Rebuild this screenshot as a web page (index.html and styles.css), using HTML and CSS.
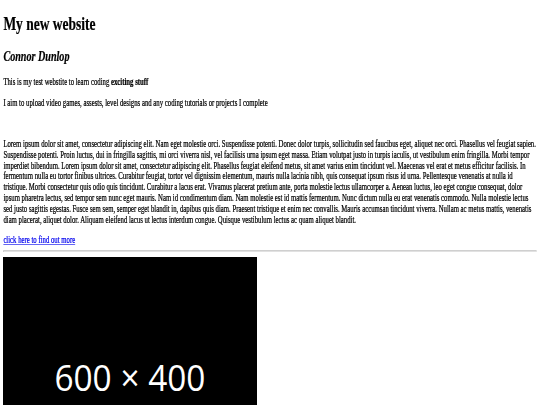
FILE: index.html
```html
<!DOCTYPE html>
<html lang="en">
<head>
<meta charset="utf-8">
<title>My new website</title>
<link rel="stylesheet" href="styles.css">
</head>
<body>
<div class="page">
  <div class="content">
    <h1>My new website</h1>
    <h2><i>Connor Dunlop</i></h2>
    <p>This is my test webstite to learn coding <b>exciting stuff</b></p>
    <p>I aim to upload video games, assests, level designs and any coding tutorials or projects I complete</p>
    <br>
    <p>Lorem ipsum dolor sit amet, consectetur adipiscing elit. Nam eget molestie orci. Suspendisse potenti. Donec dolor turpis, sollicitudin sed faucibus eget, aliquet nec orci. Phasellus vel feugiat sapien. Suspendisse potenti. Proin luctus, dui in fringilla sagittis, mi orci viverra nisl, vel facilisis urna ipsum eget massa. Etiam volutpat justo in turpis iaculis, ut vestibulum enim fringilla. Morbi tempor imperdiet bibendum. Lorem ipsum dolor sit amet, consectetur adipiscing elit. Phasellus feugiat eleifend metus, sit amet varius enim tincidunt vel. Maecenas vel erat et metus efficitur facilisis. In fermentum nulla eu tortor finibus ultrices. Curabitur feugiat, tortor vel dignissim elementum, mauris nulla lacinia nibh, quis consequat ipsum risus id urna. Pellentesque venenatis at nulla id tristique. Morbi consectetur quis odio quis tincidunt. Curabitur a lacus erat. Vivamus placerat pretium ante, porta molestie lectus ullamcorper a. Aenean luctus, leo eget congue consequat, dolor ipsum pharetra lectus, sed tempor sem nunc eget mauris. Nam id condimentum diam. Nam molestie est id mattis fermentum. Nunc dictum nulla eu erat venenatis commodo. Nulla molestie lectus sed justo sagittis egestas. Fusce sem sem, semper eget blandit in, dapibus quis diam. Praesent tristique et enim nec convallis. Mauris accumsan tincidunt viverra. Nullam ac metus mattis, venenatis diam placerat, aliquet dolor. Aliquam eleifend lacus ut lectus interdum congue. Quisque vestibulum lectus ac quam aliquet blandit.</p>
    <a class="more" href="#">click here to find out more</a>
    <hr class="rule">
    <svg class="placeholder" width="600" height="400" viewBox="0 0 600 400" role="img" aria-label="600 × 400 placeholder">
      <rect width="600" height="400" fill="#000"/>
      <text x="300" y="222" text-anchor="middle" fill="#fff" font-family="Open Sans, DejaVu Sans, sans-serif" font-size="59" textLength="358" lengthAdjust="spacingAndGlyphs">600 × 400</text>
    </svg>
  </div>
</div>
</body>
</html>
```
FILE: styles.css
```css
html, body {
  margin: 0;
  padding: 0;
  overflow: hidden;
  background: #fff;
}

.page {
  display: flow-root;
  width: 1280px;
  transform: scale(0.421875, 0.604);
  transform-origin: 0 0;
  font-family: "Liberation Serif", "Times New Roman", serif;
  font-size: 16px;
  color: #000;
  -webkit-text-stroke: 0.4px #000;
}

.content {
  margin: 8px;
}

.more {
  color: #0000ee;
  text-decoration: underline;
  -webkit-text-stroke-color: #0000ee;
}

.rule {
  margin: 8px 0;
  border: 1px inset #eee;
  border-color: #c8c8c8 #e6e6e6 #e6e6e6 #c8c8c8;
}

.placeholder {
  display: inline-block;
  vertical-align: baseline;
}
```
